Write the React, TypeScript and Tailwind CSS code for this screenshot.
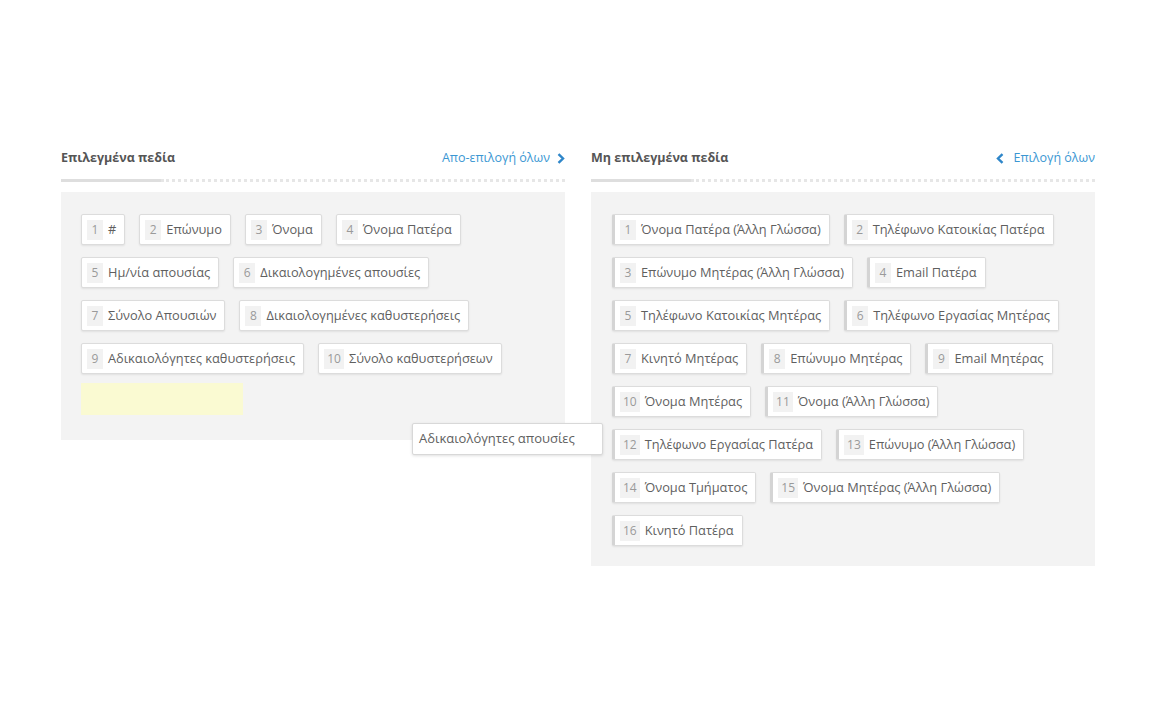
import React from "react";

const selected: [number, string][] = [
  [1, "#"],
  [2, "Επώνυμο"],
  [3, "Όνομα"],
  [4, "Όνομα Πατέρα"],
  [5, "Ημ/νία απουσίας"],
  [6, "Δικαιολογημένες απουσίες"],
  [7, "Σύνολο Απουσιών"],
  [8, "Δικαιολογημένες καθυστερήσεις"],
  [9, "Αδικαιολόγητες καθυστερήσεις"],
  [10, "Σύνολο καθυστερήσεων"],
];

const unselected: [number, string][] = [
  [1, "Όνομα Πατέρα (Άλλη Γλώσσα)"],
  [2, "Τηλέφωνο Κατοικίας Πατέρα"],
  [3, "Επώνυμο Μητέρας (Άλλη Γλώσσα)"],
  [4, "Email Πατέρα"],
  [5, "Τηλέφωνο Κατοικίας Μητέρας"],
  [6, "Τηλέφωνο Εργασίας Μητέρας"],
  [7, "Κινητό Μητέρας"],
  [8, "Επώνυμο Μητέρας"],
  [9, "Email Μητέρας"],
  [10, "Όνομα Μητέρας"],
  [11, "Όνομα (Άλλη Γλώσσα)"],
  [12, "Τηλέφωνο Εργασίας Πατέρα"],
  [13, "Επώνυμο (Άλλη Γλώσσα)"],
  [14, "Όνομα Τμήματος"],
  [15, "Όνομα Μητέρας (Άλλη Γλώσσα)"],
  [16, "Κινητό Πατέρα"],
];

function Chip({ n, label, left }: { n: number; label: string; left?: boolean }) {
  return (
    <div
      className={
        "flex h-[31px] items-center rounded-[2px] border border-[#dcdcdc] bg-white pl-[5px] pr-[8px] shadow-[0_1px_2px_rgba(0,0,0,0.08)] " +
        (left ? "border-l-[3px] border-l-[#d4d4d4]" : "")
      }
    >
      <span className="mr-[5px] flex h-[20px] min-w-[16px] items-center justify-center bg-[#f2f2f2] px-[3px] text-[12px] text-[#9a9a9a]">
        {n}
      </span>
      <span className="text-[12.8px] text-[#5f5f5f]">{label}</span>
    </div>
  );
}

function Header({ title, link, dir }: { title: string; link: string; dir: "right" | "left" }) {
  const chev =
    dir === "right" ? (
      <svg width="8" height="11" viewBox="0 0 8 11" className="ml-[7px]">
        <path d="M1.5 1.2 L6 5.5 L1.5 9.8" stroke="#2e86c9" strokeWidth="2.4" fill="none" />
      </svg>
    ) : (
      <svg width="8" height="11" viewBox="0 0 8 11" className="mr-[10px]">
        <path d="M6.5 1.2 L2 5.5 L6.5 9.8" stroke="#2e86c9" strokeWidth="2.4" fill="none" />
      </svg>
    );
  return (
    <div>
      <div className="flex h-[16px] items-center justify-between">
        <span className="text-[12.5px] font-bold text-[#555555]">{title}</span>
        <span className="flex items-center text-[12.5px] text-[#3b97d3]">
          {dir === "left" && chev}
          {link}
          {dir === "right" && chev}
        </span>
      </div>
      <div className="mt-[13px] flex items-center">
        <div className="h-[3px] w-[100px] bg-[#dedede]" />
        <div className="flex-1 border-t-[3px] border-dotted border-[#e6e6e6]" />
      </div>
    </div>
  );
}

export default function App() {
  return (
    <div
      className="relative h-[724px] w-[1164px] bg-white"
      style={{ fontFamily: '"Open Sans", "Noto Sans", sans-serif' }}
    >
      <div className="flex items-start gap-[26px] pl-[61px] pt-[150px]">
        <div className="w-[504px]">
          <Header title="Επιλεγμένα πεδία" link="Απο-επιλογή όλων" dir="right" />
          <div className="mt-[10px] flex flex-wrap gap-x-[14px] gap-y-[12px] bg-[#f3f3f3] px-[20px] pb-[25px] pt-[22px]">
            {selected.map(([n, l]) => (
              <Chip key={n} n={n} label={l} />
            ))}
            <div className="basis-full h-0" />
            <div className="h-[32px] w-[162px] bg-[#fafad2] -mt-[15px]" />
          </div>
        </div>
        <div className="w-[504px]">
          <Header title="Μη επιλεγμένα πεδία" link="Επιλογή όλων" dir="left" />
          <div className="mt-[10px] flex flex-wrap gap-x-[14px] gap-y-[12px] bg-[#f3f3f3] px-[21px] pb-[20px] pt-[22px]">
            {unselected.map(([n, l]) => (
              <Chip key={n} n={n} label={l} left />
            ))}
          </div>
        </div>
      </div>
      <div className="absolute left-[412px] top-[423px] flex h-[32px] w-[191px] items-center rounded-[2px] border border-[#d8d8d8] bg-white pl-[6px] text-[13px] text-[#5f5f5f] shadow-[0_1px_3px_rgba(0,0,0,0.12)]">
        Αδικαιολόγητες απουσίες
      </div>
    </div>
  );
}
